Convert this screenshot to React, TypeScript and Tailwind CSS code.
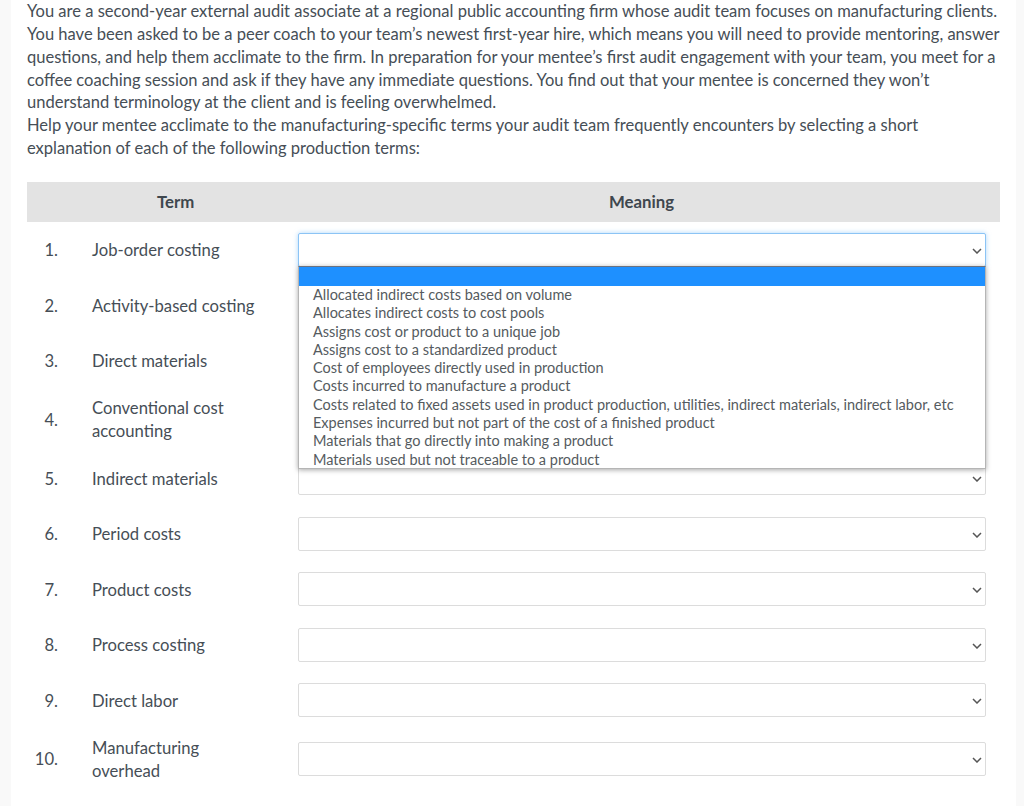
const terms: { label: string; height: string }[] = [
  { label: "Job-order costing", height: "h-[55.5px]" },
  { label: "Activity-based costing", height: "h-[55.5px]" },
  { label: "Direct materials", height: "h-[55.5px]" },
  { label: "Conventional cost accounting", height: "h-[62px]" },
  { label: "Indirect materials", height: "h-[55.5px]" },
  { label: "Period costs", height: "h-[55.5px]" },
  { label: "Product costs", height: "h-[55.5px]" },
  { label: "Process costing", height: "h-[55.5px]" },
  { label: "Direct labor", height: "h-[55.5px]" },
  { label: "Manufacturing overhead", height: "h-[62px]" },
];

const options = [
  "Allocated indirect costs based on volume",
  "Allocates indirect costs to cost pools",
  "Assigns cost or product to a unique job",
  "Assigns cost to a standardized product",
  "Cost of employees directly used in production",
  "Costs incurred to manufacture a product",
  "Costs related to fixed assets used in product production, utilities, indirect materials, indirect labor, etc",
  "Expenses incurred but not part of the cost of a finished product",
  "Materials that go directly into making a product",
  "Materials used but not traceable to a product",
];

function Chevron() {
  return (
    <svg width="10" height="6" viewBox="0 0 10 6" className="absolute right-[3px] top-[14px]">
      <path d="M1 1l4 4 4-4" fill="none" stroke="#555" strokeWidth="1.5" />
    </svg>
  );
}

function SelectBox({ focused }: { focused?: boolean }) {
  return (
    <div
      className={
        focused
          ? "relative h-[34px] rounded-[2px] border border-[#8cc4f5] bg-white shadow-[0_0_5px_rgba(120,190,250,0.6)]"
          : "relative h-[34px] rounded-[2px] border border-[#dcdcdc] bg-white"
      }
    >
      <Chevron />
    </div>
  );
}

export default function App() {
  return (
    <div className="h-[806px] overflow-hidden bg-[#f9f9f9] px-[11px] font-['Lato',sans-serif] text-[#464e56]">
      <div className="relative h-[806px] w-[1005px] bg-white pl-[16px] pr-[5px]">
        <div className="w-[975px] pb-[22px] text-[16.55px] leading-[22.85px]">
          <p>
            You are a second-year external audit associate at a regional public accounting firm whose audit team focuses on manufacturing clients. You have been asked to be a peer coach to your team’s newest first-year hire, which means you will need to provide mentoring, answer questions, and help them acclimate to the firm. In preparation for your mentee’s first audit engagement with your team, you meet for a coffee coaching session and ask if they have any immediate questions. You find out that your mentee is concerned they won’t understand terminology at the client and is feeling overwhelmed.
          </p>
          <p>
            Help your mentee acclimate to the manufacturing-specific terms your audit team frequently encounters by selecting a short explanation of each of the following production terms:
          </p>
        </div>

        <div className="flex h-[40px] w-[973px] items-center bg-[#e3e3e3] text-[16.8px] font-bold text-[#3f474e]">
          <div className="w-[297px] pl-[130px]">Term</div>
          <div className="flex-1 pl-[285px]">Meaning</div>
        </div>

        <div className="w-[973px] text-[16.65px] leading-[23px]">
          {terms.map((term, i) => (
            <div key={term.label} className={`flex items-center ${term.height}`}>
              <div className="w-[31px] pt-[2px] text-right">{i + 1}.</div>
              <div className="ml-[34px] w-[206px] pr-[36px] pt-[2px]">{term.label}</div>
              <div className="w-[688px]">
                <SelectBox focused={i === 0} />
              </div>
            </div>
          ))}
        </div>

        <div className="absolute left-[287px] top-[266px] h-[203px] w-[688px] border border-t-[#6b7280] border-x-[#b5b5b5] border-b-[#b5b5b5] bg-white text-[14.5px] leading-[18.3px] text-[#555b60] shadow-[0_1px_5px_rgba(0,0,0,0.35)]">
          <div className="h-[19px] bg-[#1e90ff]" />
          {options.map((option) => (
            <div key={option} className="pl-[14px]">
              {option}
            </div>
          ))}
        </div>
      </div>
    </div>
  );
}
